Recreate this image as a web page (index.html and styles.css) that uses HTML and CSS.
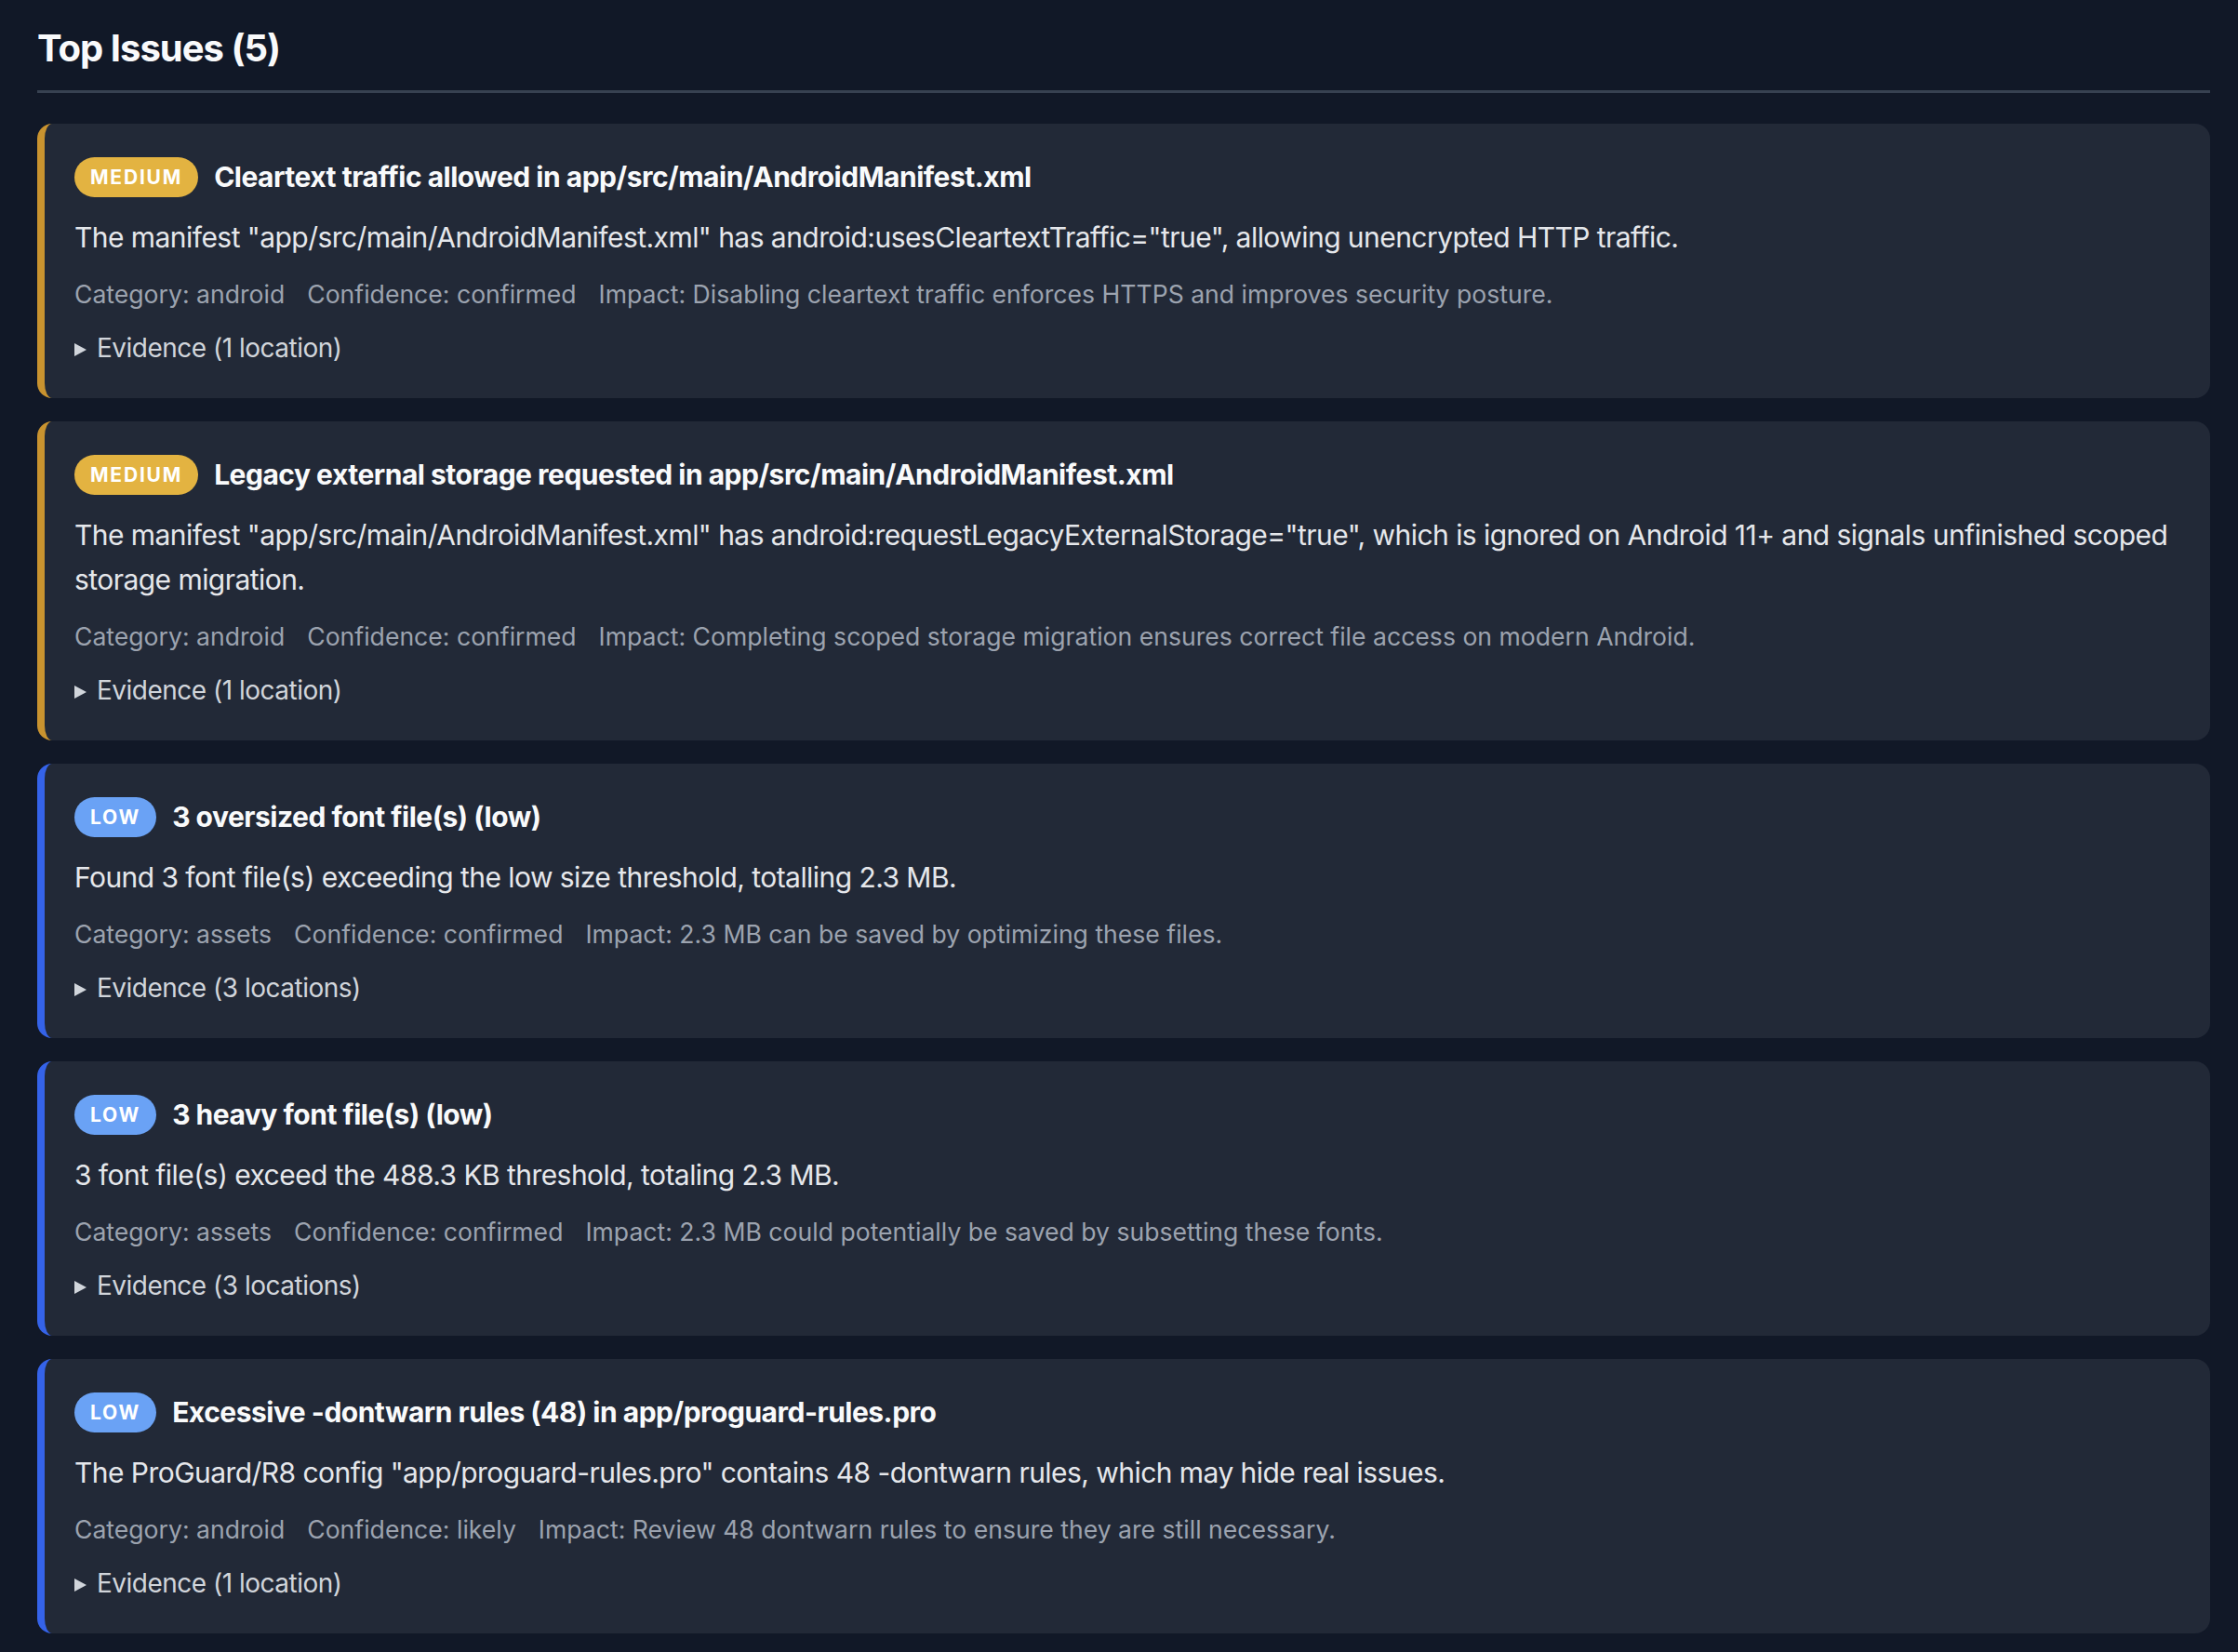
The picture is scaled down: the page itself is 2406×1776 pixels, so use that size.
FILE: index.html
```html
<!DOCTYPE html>
<html lang="en">

<head>
    <meta charset="UTF-8">
    <meta name="viewport" content="width=device-width, initial-scale=1.0">
    <title>Top Issues</title>
    <link rel="stylesheet" href="styles.css">
</head>

<body>
    <section class="issues">
        <h2 class="issues-title">Top Issues (5)</h2>

        <div class="issue issue-medium">
            <div class="issue-head">
                <span class="badge badge-medium">Medium</span>
                <span class="issue-name">Cleartext traffic allowed in app/src/main/AndroidManifest.xml</span>
            </div>
            <p class="issue-desc">The manifest "app/src/main/AndroidManifest.xml" has android:usesCleartextTraffic="true", allowing unencrypted HTTP traffic.</p>
            <div class="issue-meta">
                <span>Category: android</span>
                <span>Confidence: confirmed</span>
                <span>Impact: Disabling cleartext traffic enforces HTTPS and improves security posture.</span>
            </div>
            <details class="evidence">
                <summary>Evidence (1 location)</summary>
            </details>
        </div>

        <div class="issue issue-medium">
            <div class="issue-head">
                <span class="badge badge-medium">Medium</span>
                <span class="issue-name">Legacy external storage requested in app/src/main/AndroidManifest.xml</span>
            </div>
            <p class="issue-desc">The manifest "app/src/main/AndroidManifest.xml" has android:requestLegacyExternalStorage="true", which is ignored on Android 11+ and signals unfinished scoped storage migration.</p>
            <div class="issue-meta">
                <span>Category: android</span>
                <span>Confidence: confirmed</span>
                <span>Impact: Completing scoped storage migration ensures correct file access on modern Android.</span>
            </div>
            <details class="evidence">
                <summary>Evidence (1 location)</summary>
            </details>
        </div>

        <div class="issue issue-low">
            <div class="issue-head">
                <span class="badge badge-low">Low</span>
                <span class="issue-name">3 oversized font file(s) (low)</span>
            </div>
            <p class="issue-desc">Found 3 font file(s) exceeding the low size threshold, totalling 2.3 MB.</p>
            <div class="issue-meta">
                <span>Category: assets</span>
                <span>Confidence: confirmed</span>
                <span>Impact: 2.3 MB can be saved by optimizing these files.</span>
            </div>
            <details class="evidence">
                <summary>Evidence (3 locations)</summary>
            </details>
        </div>

        <div class="issue issue-low">
            <div class="issue-head">
                <span class="badge badge-low">Low</span>
                <span class="issue-name">3 heavy font file(s) (low)</span>
            </div>
            <p class="issue-desc">3 font file(s) exceed the 488.3 KB threshold, totaling 2.3 MB.</p>
            <div class="issue-meta">
                <span>Category: assets</span>
                <span>Confidence: confirmed</span>
                <span>Impact: 2.3 MB could potentially be saved by subsetting these fonts.</span>
            </div>
            <details class="evidence">
                <summary>Evidence (3 locations)</summary>
            </details>
        </div>

        <div class="issue issue-low">
            <div class="issue-head">
                <span class="badge badge-low">Low</span>
                <span class="issue-name">Excessive -dontwarn rules (48) in app/proguard-rules.pro</span>
            </div>
            <p class="issue-desc">The ProGuard/R8 config "app/proguard-rules.pro" contains 48 -dontwarn rules, which may hide real issues.</p>
            <div class="issue-meta">
                <span>Category: android</span>
                <span>Confidence: likely</span>
                <span>Impact: Review 48 dontwarn rules to ensure they are still necessary.</span>
            </div>
            <details class="evidence">
                <summary>Evidence (1 location)</summary>
            </details>
        </div>
    </section>
</body>

</html>
```

FILE: styles.css
```css
html, body {
    margin: 0;
    padding: 0;
}

body {
    background-color: #111827;
    color: #e5e7eb;
    font-family: Inter, "Noto Sans", "Liberation Sans", sans-serif;
    min-height: 100vh;
}

.issues {
    padding: 27px 30px 22px 40px;
}

.issues-title {
    margin: 0 0 33px 0;
    padding-bottom: 20px;
    border-bottom: 3px solid #374151;
    font-size: 40px;
    line-height: 50px;
    font-weight: 700;
    letter-spacing: -1px;
    color: #f9fafb;
}

.issue {
    background-color: #222937;
    border-left: 8px solid transparent;
    border-radius: 16px;
    padding: 32px 32px 30px 32px;
    margin-bottom: 25px;
}

.issue-medium {
    border-left-color: #c9932f;
}

.issue-low {
    border-left-color: #3563e9;
}

.issue-head {
    display: flex;
    align-items: center;
    height: 50px;
}

.badge {
    display: inline-block;
    height: 43px;
    line-height: 43px;
    padding: 0 17px;
    border-radius: 22px;
    font-size: 21px;
    font-weight: 700;
    letter-spacing: 1.8px;
    text-transform: uppercase;
    color: #ffffff;
    margin-right: 17px;
}

.badge-medium {
    background-color: #e3b341;
}

.badge-low {
    background-color: #6aa2f5;
}

.issue-name {
    font-size: 30px;
    font-weight: 700;
    letter-spacing: -0.5px;
    color: #f9fafb;
}

.issue-desc {
    margin: 16px 0 0 0;
    font-size: 30px;
    line-height: 48px;
    letter-spacing: -0.55px;
    color: #e5e7eb;
}

.issue-meta {
    display: flex;
    gap: 24px;
    margin-top: 16px;
    font-size: 26.6px;
    line-height: 42px;
    color: #9ca3af;
}

.evidence {
    margin-top: 13px;
    font-size: 28px;
    line-height: 48px;
    letter-spacing: -0.5px;
    color: #d1d5db;
}

.evidence summary {
    list-style: none;
    cursor: pointer;
}

.evidence summary::-webkit-details-marker {
    display: none;
}

/* closed disclosure arrow */
.evidence summary::before {
    content: "";
    display: inline-block;
    width: 0;
    height: 0;
    border-top: 7px solid transparent;
    border-bottom: 7px solid transparent;
    border-left: 13px solid #d1d5db;
    margin-right: 11px;
    vertical-align: 1px;
}
```
